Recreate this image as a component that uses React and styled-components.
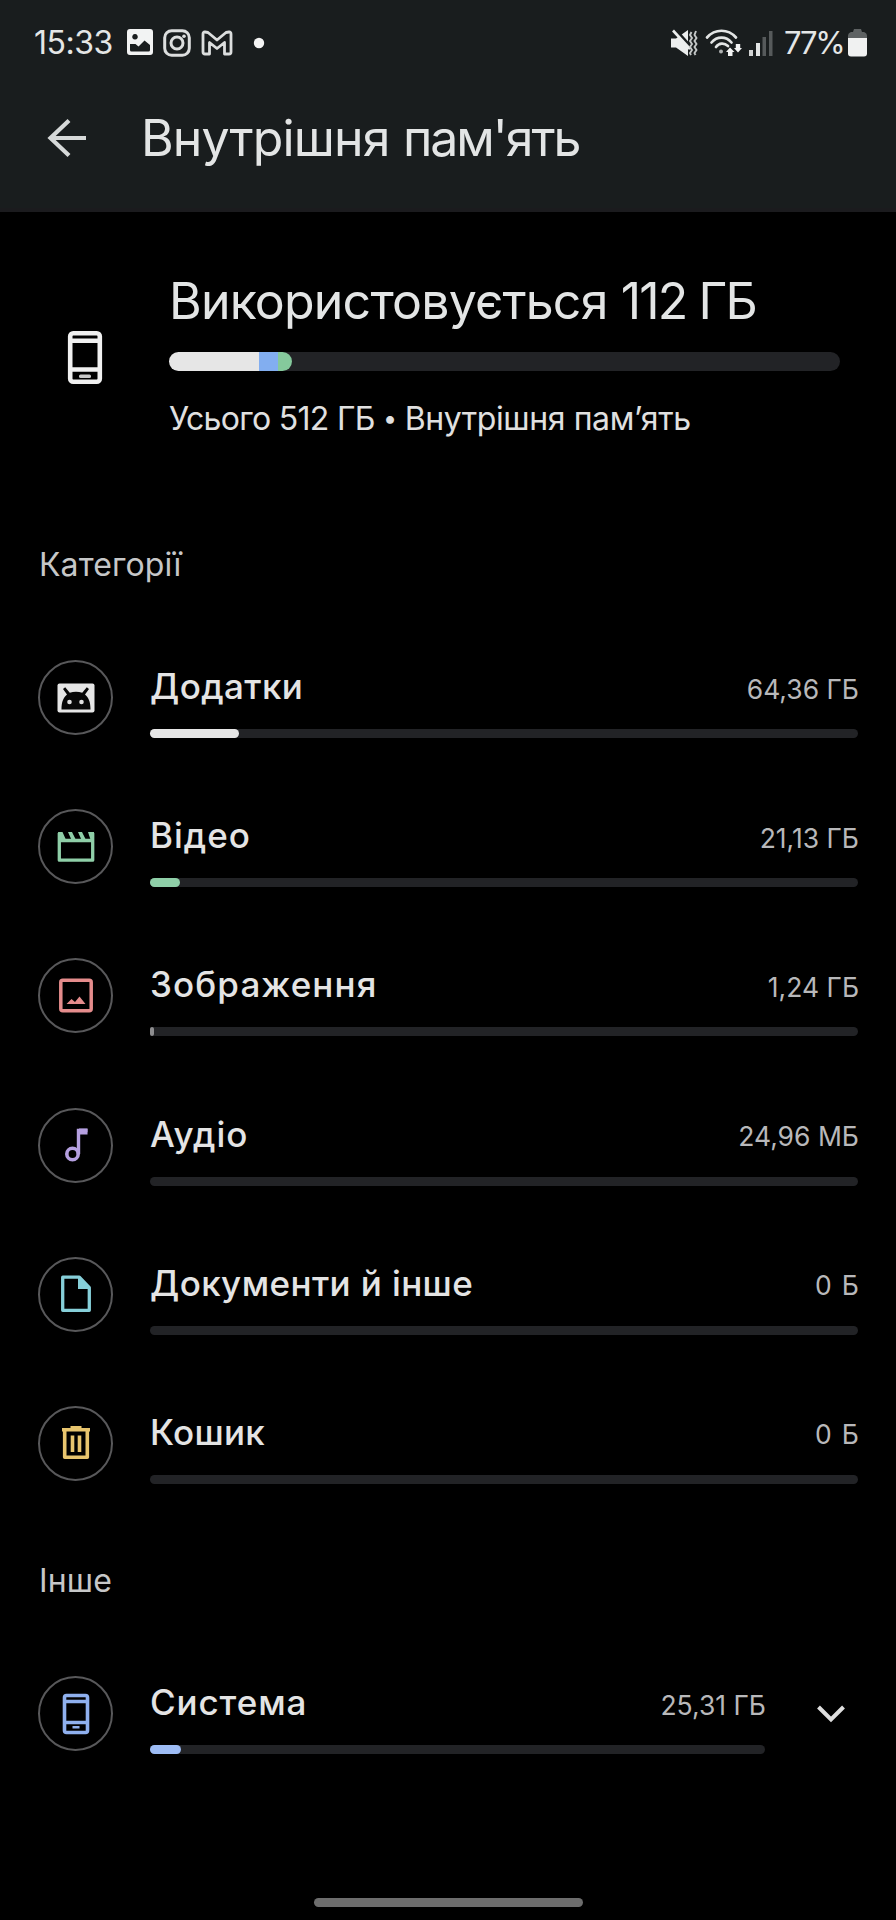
import React from "react";
import styled, { createGlobalStyle } from "styled-components";

const GlobalStyle = createGlobalStyle`
  * { box-sizing: border-box; }
  body { margin: 0; background: #000; }
`;

const Screen = styled.div`
  width: 896px;
  height: 1920px;
  overflow: hidden;
  display: flex;
  flex-direction: column;
  background: #000;
  color: #e6e6e6;
  font-family: Inter, "Noto Sans", sans-serif;
  white-space: nowrap;
`;

const Header = styled.header`
  height: 212px;
  flex: none;
  background: #191d1e;
  border-bottom: 4px solid #1b1b1e;
`;

const StatusBar = styled.div`
  height: 85px;
  display: flex;
  justify-content: space-between;
  padding: 0 29px 0 34px;
`;

const StatusGroup = styled.div`
  display: flex;
  align-items: center;
  gap: ${(p) => p.$gap}px;
`;

const StatusText = styled.span`
  font-size: ${(p) => p.$size}px;
  line-height: 40px;
  letter-spacing: ${(p) => p.$spacing}px;
  width: ${(p) => p.$width}px;
  margin-left: ${(p) => p.$left || 0}px;
  color: #e4e6e6;
`;

const Toolbar = styled.div`
  height: 106px;
  display: flex;
  align-items: center;
  padding-left: 44px;
  gap: 53px;
`;

const Title = styled.h1`
  margin: 0;
  font-size: 50px;
  font-weight: 400;
  line-height: 60px;
  color: #e3e5e5;
`;

const Tracked = styled.span`
  letter-spacing: ${(p) => p.$spacing}px;
`;

const Summary = styled.section`
  height: 310px;
  flex: none;
  display: flex;
  gap: 63px;
  padding: 59px 56px 0 64px;
`;

const SummaryIcon = styled.div`
  width: 42px;
  height: 60px;
  margin-top: 56px;
`;

const SummaryBody = styled.div`
  flex: 1;
`;

const Meter = styled.div`
  display: flex;
  height: ${(p) => p.$height}px;
  border-radius: 10px;
  background: #222326;
  margin-top: ${(p) => p.$top}px;
`;

const Segment = styled.div`
  background: ${(p) => p.$color};
  width: ${(p) => p.$width}px;
  border-radius: ${(p) => (p.$round ? p.$round : "0")};
`;

const Caption = styled.p`
  margin: 28px 0 0;
  font-size: 32px;
  line-height: 40px;
  color: #e0e0e0;
`;

const Bullet = styled.span`
  font-size: 25px;
  line-height: 1;
  vertical-align: 3px;
`;

const SectionLabel = styled.h2`
  margin: 0;
  height: ${(p) => p.$height}px;
  flex: none;
  padding: ${(p) => p.$top}px 0 0 39px;
  font-size: 32px;
  font-weight: 400;
  line-height: 40px;
  letter-spacing: 0.1px;
  color: #c6c7c8;
`;

const List = styled.div`
  display: flex;
  flex-direction: column;
  flex: none;
`;

const Row = styled.div`
  height: 149.2px;
  display: flex;
  align-items: flex-start;
  padding: 37px 38px 0 38px;
`;

const Badge = styled.div`
  width: 75px;
  height: 75px;
  flex: none;
  border: 2.5px solid #58585a;
  border-radius: 50%;
  display: flex;
  align-items: center;
  justify-content: center;
  margin-right: 37px;
`;

const RowBody = styled.div`
  flex: 1;
  padding-top: 4px;
`;

const RowText = styled.div`
  display: flex;
  justify-content: space-between;
  align-items: center;
  height: 44px;
`;

const Name = styled.span`
  font-size: 35px;
  font-weight: 500;
  letter-spacing: ${(p) => p.$spacing}px;
  color: #e4e4e4;
`;

const Size = styled.span`
  font-size: 26.5px;
  padding-top: 5px;
  letter-spacing: ${(p) => p.$spacing}px;
  margin-right: ${(p) => -p.$spacing - 1}px;
  color: #b8b8ba;
`;

const Expand = styled.div`
  width: 93px;
  height: 76px;
  display: flex;
  align-items: center;
  justify-content: flex-end;
  padding-right: 12px;
`;

const HomeArea = styled.footer`
  margin-top: auto;
  height: 22px;
  display: flex;
  justify-content: center;
`;

const HomeHandle = styled.div`
  width: 269px;
  height: 9px;
  border-radius: 5px;
  background: #6d6d6d;
`;

const Svg = ({ w, h, children }) => (
  <svg width={w} height={h} viewBox={`0 0 ${w} ${h}`} fill="none">
    {children}
  </svg>
);

const PictureIcon = () => (
  <Svg w={26} h={27}>
    <path fill="#f2f3f3" fillRule="evenodd" d="M3 0h20a3 3 0 0 1 3 3v20a3 3 0 0 1-3 3H3a3 3 0 0 1-3-3V3a3 3 0 0 1 3-3Zm0 15v6q0 1.500 1.500 1.500h17q1.500 0 1.500-1.500v-5l-5.500-4.500-6 6-3-2.500ZM8 5a2.800 2.800 0 1 0 .01 0Z" />
  </Svg>
);

const CameraIcon = () => (
  <Svg w={28} h={28}>
    <rect x="1.700" y="1.700" width="24.600" height="24.600" rx="7" stroke="#dcdede" strokeWidth="3" />
    <circle cx="14" cy="14" r="6" stroke="#dcdede" strokeWidth="3" />
    <circle cx="21" cy="7.200" r="1.800" fill="#dcdede" />
  </Svg>
);

const MailIcon = () => (
  <Svg w={32} h={26}>
    <path d="M2 4Q2 1.800 4 2l3 .5L16 10l9-7.500 3-.5q2-.2 2 2V22q0 2-2 2h-4.500V12.500L16 18.500l-7.500-6V24H4q-2 0-2-2Z" stroke="#dcdede" strokeWidth="2.800" strokeLinejoin="round" />
  </Svg>
);

const DotIcon = () => (
  <Svg w={12} h={12}>
    <circle cx="6" cy="6" r="5.200" fill="#f4f4f4" />
  </Svg>
);

const MuteIcon = () => (
  <Svg w={28} h={28}>
    <path d="M0 9.500h5L17 1v26L5 18.500H0Z" fill="#eceeee" />
    <path d="M4.500.5 19 17" stroke="#191d1e" strokeWidth="3" />
    <path d="M2 1.500 19 20" stroke="#eceeee" strokeWidth="2.600" />
    <path d="m20.500 3-1.500 3 2 3-2 3 2 3-2 3 2 3-2 3 1 2M25 2l-1.500 4 2 3-2 3 2 3-2 3 2 3-2 3 1 2" stroke="#c4c7c7" strokeWidth="1.900" />
  </Svg>
);

const WifiIcon = () => (
  <Svg w={38} h={30}>
    <g stroke="#e2e4e4" strokeWidth="2.700" strokeLinecap="round">
      <path d="M2 9.500C10 .5 23 .5 31 9.500" />
      <path d="M6.500 14.500c5.500-6.500 14.500-6.500 20 0" />
      <path d="M11 19c3-4 8-4.500 12-1" />
    </g>
    <circle cx="16" cy="23.500" r="2" fill="#aeb1b1" />
    <path d="m25 19.500-4 4.500h2v4h4.500v-4h2ZM33 24.500l-4-4.500h1.800v-4h4.400v4H37Z" fill="#f2f3f3" />
  </Svg>
);

const SignalIcon = () => (
  <Svg w={24} h={28}>
    <rect x="0" y="21" width="4" height="6" fill="#d2d4d4" />
    <rect x="7" y="14" width="4" height="13" fill="#e2e4e4" />
    <rect x="13.500" y="8" width="3.500" height="19" fill="#565a5b" />
    <rect x="20" y="2" width="3.500" height="25" fill="#565a5b" />
  </Svg>
);

const BatteryIcon = () => (
  <Svg w={19} h={28}>
    <path d="M6 0h7l1 3h2q3 1 3 4v3H0V7q0-3 3-4h2Z" fill="#5e6263" />
    <path d="M0 9h19v15.500q0 3-3 3H3q-3 0-3-3Z" fill="#f0f1f1" />
  </Svg>
);

const BackIcon = () => (
  <Svg w={44} h={44}>
    <path d="M42 22H7M25 4.500 6.500 22 25 39.500" stroke="#d6d9d9" strokeWidth="4.200" />
  </Svg>
);

const LargePhoneIcon = () => (
  <Svg w={42} h={60}>
    <rect x="6.200" y="6.200" width="29.600" height="48.600" rx="3" stroke="#f0f0f0" strokeWidth="4.600" />
    <path d="M6 13.700h30M6 42.500h30" stroke="#f0f0f0" strokeWidth="4.400" />
    <rect x="15" y="47.500" width="12" height="3.500" rx="1.500" fill="#c8c8c8" />
  </Svg>
);

const AppsIcon = () => (
  <Svg w={44} h={44}>
    <rect x="3.500" y="7.500" width="37" height="29" rx="2" fill="#e6e6e6" />
    <path d="M7.500 33.500c0-8 2-12 5.500-15l-4-5.500 2.200-1.800 4.600 5.600c4-1.300 8.400-1.300 12.400 0l4.600-5.600 2.200 1.800-4 5.500c3.500 3 5.500 7 5.500 15Z" fill="#080808" />
    <circle cx="15.500" cy="26" r="2.300" fill="#e0e0e0" />
    <circle cx="27.500" cy="26" r="2.300" fill="#e0e0e0" />
  </Svg>
);

const VideoIcon = () => (
  <Svg w={44} h={44}>
    <path d="M5.300 8v27.200h33.400V8M5 15.500h34" stroke="#8fcfa8" strokeWidth="3.300" strokeLinejoin="round" />
    <path d="M4 7h4.500l4 9H5ZM14 7h4l4.500 9h-4.500ZM24 7h4l4.500 9h-4.500ZM34 7h6v9h-3Z" fill="#8fcfa8" />
  </Svg>
);

const ImageIcon = () => (
  <Svg w={44} h={44}>
    <rect x="6.800" y="6.300" width="30.400" height="30.400" rx="2" stroke="#e58c8c" strokeWidth="3.500" />
    <path d="m12.500 30 5-5 3.500 3 4.500-5.500 6 7.500Z" fill="#e58c8c" />
  </Svg>
);

const AudioIcon = () => (
  <Svg w={44} h={44}>
    <circle cx="18.500" cy="31" r="5.700" stroke="#b5a0e0" strokeWidth="3.600" />
    <path d="M24.500 31V7.500h9" stroke="#b5a0e0" strokeWidth="3.400" />
    <path d="M25 5.500h8.500v6H25Z" fill="#b5a0e0" />
  </Svg>
);

const DocumentIcon = () => (
  <Svg w={44} h={44}>
    <path d="M8.700 5.200h16.600l10 10.500v22.600H8.700Z" stroke="#86cfd9" strokeWidth="3.300" strokeLinejoin="round" />
    <path d="M24 4.500v12.500h12Z" fill="#86cfd9" />
  </Svg>
);

const TrashIcon = () => (
  <Svg w={44} h={44}>
    <path d="M8 8.800h28M16.500 6.800h11" stroke="#e8c56e" strokeWidth="3.400" />
    <path d="M10.700 9v27.300h22.600V9" stroke="#e8c56e" strokeWidth="3.600" strokeLinejoin="round" />
    <path d="M18.500 14.500V31M25.500 14.500V31" stroke="#e8c56e" strokeWidth="3.600" />
  </Svg>
);

const SystemIcon = () => (
  <Svg w={44} h={44}>
    <rect x="10.500" y="3.500" width="23" height="37" rx="2" stroke="#8fb0ee" strokeWidth="3.600" />
    <path d="M10 9.500h24M10 30.500h24" stroke="#8fb0ee" strokeWidth="3.400" />
    <rect x="18.500" y="34" width="7" height="2.500" fill="#8fb0ee" />
  </Svg>
);

const ChevronIcon = () => (
  <Svg w={30} h={20}>
    <path d="m2.500 3 12.500 12.500L27.500 3" stroke="#dedede" strokeWidth="4" />
  </Svg>
);

const categories = [
  { name: "Додатки", size: "64,36 ГБ", icon: AppsIcon, fill: 89, color: "#e6e6e6", ns: 0.4, ss: 0 },
  { name: "Відео", size: "21,13 ГБ", icon: VideoIcon, fill: 30, color: "#8fcfa8", ns: 1, ss: 0 },
  { name: "Зображення", size: "1,24 ГБ", icon: ImageIcon, fill: 4, color: "#8d8d8f", ns: 1.1, ss: 0 },
  { name: "Аудіо", size: "24,96 МБ", icon: AudioIcon, fill: 0, color: "#b5a0e0", ns: 1, ss: 0 },
  { name: "Документи й інше", size: "0 Б", icon: DocumentIcon, fill: 0, color: "#86cfd9", ns: 0.4, ss: 1.4 },
  { name: "Кошик", size: "0 Б", icon: TrashIcon, fill: 0, color: "#e8c56e", ns: 0.3, ss: 1.4 },
];

const system = { name: "Система", size: "25,31 ГБ", icon: SystemIcon, fill: 31, color: "#9dbcf5", ns: 0.9, ss: 0 };

function StorageRow({ item, expandable }) {
  const Icon = item.icon;
  return (
    <Row>
      <Badge><Icon /></Badge>
      <RowBody>
        <RowText>
          <Name $spacing={item.ns}>{item.name}</Name>
          <Size $spacing={item.ss}>{item.size}</Size>
        </RowText>
        <Meter $height={9} $top={21}>
          <Segment $color={item.color} $width={item.fill} $round="5px" />
        </Meter>
      </RowBody>
      {expandable && <Expand><ChevronIcon /></Expand>}
    </Row>
  );
}

export default function App() {
  return (
    <Screen>
      <GlobalStyle />
      <Header>
        <StatusBar>
          <StatusGroup $gap={10}>
            <StatusText $size={32} $spacing={-0.5} $width={83}>15:33</StatusText>
            <PictureIcon />
            <CameraIcon />
            <MailIcon />
            <span />
            <DotIcon />
          </StatusGroup>
          <StatusGroup $gap={6}>
            <MuteIcon />
            <WifiIcon />
            <SignalIcon />
            <StatusText $size={31} $spacing={-2.2} $width={58} $left={5}>77%</StatusText>
            <BatteryIcon />
          </StatusGroup>
        </StatusBar>
        <Toolbar>
          <BackIcon />
          <Title>
            <Tracked $spacing={-0.85}>Внутрішня </Tracked>
            <Tracked $spacing={-2}>пам'ять</Tracked>
          </Title>
        </Toolbar>
      </Header>
      <Summary>
        <SummaryIcon><LargePhoneIcon /></SummaryIcon>
        <SummaryBody>
          <Title>
            <Tracked $spacing={-0.8}>Використовується </Tracked>
            <Tracked $spacing={-1.9}>112 ГБ</Tracked>
          </Title>
          <Meter $height={19} $top={21}>
            <Segment $color="#e6e6e6" $width={90} $round="10px 0 0 10px" />
            <Segment $color="#82aef0" $width={19} />
            <Segment $color="#85c99c" $width={14} $round="0 10px 10px 0" />
          </Meter>
          <Caption>
            <Tracked $spacing={-0.7}>Усього 512 ГБ <Bullet>•</Bullet> </Tracked>
            <Tracked $spacing={-0.4}>Внутрішня пам’ять</Tracked>
          </Caption>
        </SummaryBody>
      </Summary>
      <SectionLabel $height={101} $top={23}>Категорії</SectionLabel>
      <List>
        {categories.map((item) => <StorageRow key={item.name} item={item} />)}
      </List>
      <SectionLabel $height={121} $top={43}>Інше</SectionLabel>
      <StorageRow item={system} expandable />
      <HomeArea><HomeHandle /></HomeArea>
    </Screen>
  );
}
